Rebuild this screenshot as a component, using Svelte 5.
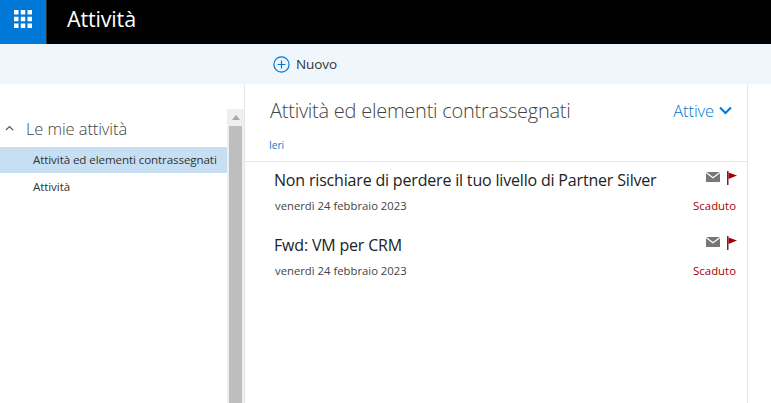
<script>
  const items = [
    { title: 'Non rischiare di perdere il tuo livello di Partner Silver', date: 'venerdì 24 febbraio 2023' },
    { title: 'Fwd: VM per CRM', date: 'venerdì 24 febbraio 2023' }
  ];
</script>

<div class="page">
  <header class="top">
    <div class="waffle">
      <svg width="18" height="18" viewBox="0 0 18 18" fill="#fff">
        {#each [0, 6.75, 13.5] as y}
          {#each [0, 6.75, 13.5] as x}
            <rect x={x} y={y} width="4.5" height="4.5" />
          {/each}
        {/each}
      </svg>
    </div>
    <div class="app">Attività</div>
  </header>
  <div class="command">
    <div class="new">
      <svg width="17" height="17" viewBox="0 0 17 17" fill="none" stroke="#0078d7" stroke-width="1.2">
        <circle cx="8.5" cy="8.5" r="7.6" />
        <path d="M8.5 4.5v8M4.5 8.5h8" />
      </svg>
      <span>Nuovo</span>
    </div>
  </div>
  <div class="body">
    <aside class="side">
      <div class="tree">
        <div class="group">
          <svg width="9" height="6" viewBox="0 0 9 6" fill="none" stroke="#555" stroke-width="1.1"><path d="M1 5l3.5-3.5L8 5" /></svg>
          <span>Le mie attività</span>
        </div>
        <div class="node selected">Attività ed elementi contrassegnati</div>
        <div class="node">Attività</div>
      </div>
      <div class="scroll">
        <div class="arrow"></div>
        <div class="thumb"></div>
      </div>
    </aside>
    <main class="main">
      <div class="head">
        <h1>Attività ed elementi contrassegnati</h1>
        <div class="filter">
          <span>Attive</span>
          <svg width="13" height="9" viewBox="0 0 13 9" fill="none" stroke="#0078d7" stroke-width="2"><path d="M1 1.5l5.5 5.5L12 1.5" /></svg>
        </div>
      </div>
      <div class="when">Ieri</div>
      <div class="list">
        {#each items as item}
          <div class="item">
            <div class="row">
              <div class="title">{item.title}</div>
              <div class="icons">
                <svg width="14" height="10" viewBox="0 0 14 10">
                  <rect width="14" height="10" fill="#777" />
                  <path d="M0 .6l7 5.2L14 .6" fill="none" stroke="#fff" stroke-width="1.2" />
                </svg>
                <svg class="flag" width="10" height="14" viewBox="0 0 10 14">
                  <rect x="0" y="0" width="1.5" height="14" fill="#7a2030" />
                  <path d="M1.5 1.5L10 4.5 1.5 8z" fill="#a80000" />
                </svg>
              </div>
            </div>
            <div class="row second">
              <div class="date">{item.date}</div>
              <div class="late">Scaduto</div>
            </div>
          </div>
        {/each}
      </div>
    </main>
  </div>
</div>

<style>
  :global(body) { margin: 0; background: #fff; }
  .page {
    width: 771px; height: 403px; overflow: hidden;
    font-family: "Open Sans", "Noto Sans", sans-serif;
    color: #333;
    display: flex; flex-direction: column;
  }
  .top { height: 44px; background: #000; display: flex; flex: none; }
  .waffle {
    width: 47px; flex: none; background: #0078d7; display: flex; align-items: center; justify-content: center;
    border-right: 1px solid #333; padding-bottom: 6px; padding-right: 1px; box-sizing: border-box;
  }
  .app { margin-left: 20px; color: #fff; font-size: 21.5px; line-height: 38px; letter-spacing: -0.15px; }
  .command { height: 40px; background: #eff6fc; flex: none; display: flex; align-items: center; padding-left: 273px; box-sizing: border-box; }
  .new { display: flex; align-items: center; gap: 6px; font-size: 13.5px; color: #333; letter-spacing: -0.1px; }
  .new svg { flex: none; }
  .body { flex: 1; display: flex; min-height: 0; }
  .side { width: 245px; flex: none; box-sizing: border-box; border-right: 1px solid #e6e6e6; display: flex; padding-top: 25px; }
  .tree { width: 227px; flex: none; }
  .group { height: 38px; box-sizing: border-box; display: flex; align-items: center; font-size: 16.5px; font-weight: 300; color: #444; letter-spacing: -0.1px; }
  .group svg { margin-left: 5px; margin-right: 12px; flex: none; }
  .node { height: 26px; line-height: 26px; padding-left: 33px; font-size: 11.6px; color: #333; letter-spacing: -0.1px; white-space: nowrap; }
  .node + .node { line-height: 28px; }
  .selected { background: #c7dff3; }
  .scroll { width: 17px; flex: none; background: #efefef; display: flex; flex-direction: column; }
  .arrow { height: 17px; flex: none; width: 100%; display: flex; justify-content: center; align-items: center; }
  .arrow::before { content: ""; border: 4px solid transparent; border-bottom: 5px solid #a8a8a8; border-top: 0; }
  .thumb { flex: 1; width: 13px; background: #bebebe; margin-left: 2px; }
  .main { width: 503px; flex: none; box-sizing: border-box; border-right: 1px solid #e6e6e6; display: flex; flex-direction: column; }
  .head { display: flex; justify-content: space-between; align-items: center; height: 52px; padding: 0 15px 0 25px; }
  h1 { margin: 0; font-size: 20px; font-weight: 300; color: #444; letter-spacing: -0.25px; white-space: nowrap; }
  .filter { display: flex; align-items: center; gap: 5px; color: #0078d7; font-size: 16.5px; font-weight: 300; letter-spacing: -0.1px; }
  .when { font-size: 10px; color: #0078d7; padding-left: 24px; height: 25px; line-height: 18px; box-sizing: border-box; }
  .list { border-top: 1px solid #e6e6e6; }
  .item { height: 65px; padding: 7px 11px 0 29px; box-sizing: border-box; }
  .row { display: flex; justify-content: space-between; align-items: center; }
  .title { font-size: 16px; color: #222; line-height: 22px; letter-spacing: -0.18px; white-space: nowrap; }
  .icons { display: flex; align-items: flex-start; gap: 7px; margin-right: -1px; align-self: flex-start; padding-top: 3px; }
  .flag { margin-top: -1px; }
  .second { margin-top: 7px; }
  .date { font-size: 11.3px; color: #444; padding-left: 1px; }
  .late { font-size: 11.4px; color: #a80000; }
</style>
